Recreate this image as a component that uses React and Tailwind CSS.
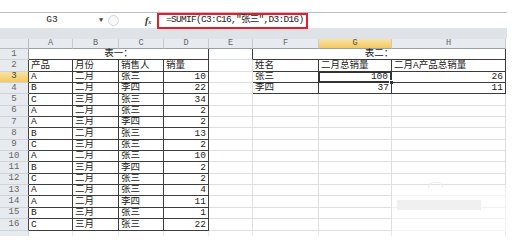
import React from "react";

const COL_W = [44, 46, 45, 45, 44, 66, 73, 114];
const LETTERS = ["A", "B", "C", "D", "E", "F", "G", "H"];

const DARK = "border-[#3c3c3c]";
const LIGHT = "border-[#dedfe0]";

const sales = [
  ["产品", "月份", "销售人", "销量"],
  ["A", "二月", "张三", 10],
  ["B", "二月", "李四", 22],
  ["C", "三月", "张三", 34],
  ["A", "二月", "张三", 2],
  ["A", "三月", "李四", 2],
  ["B", "二月", "张三", 13],
  ["C", "三月", "张三", 2],
  ["A", "二月", "张三", 10],
  ["B", "三月", "李四", 2],
  ["C", "二月", "张三", 2],
  ["A", "二月", "张三", 4],
  ["A", "二月", "李四", 11],
  ["B", "三月", "张三", 1],
  ["C", "三月", "张三", 22],
];

const summary = [
  ["姓名", "二月总销量", "二月A产品总销量"],
  ["张三", 100, 26],
  ["李四", 37, 11],
];

const font = "font-['Liberation_Mono','Noto_Sans_CJK_SC',monospace]";

function Cell({ value, right, bottom, selected, className = "" }) {
  const isNum = typeof value === "number";
  return (
    <div
      className={`relative flex items-end border-r border-b ${right} ${bottom} ${
        isNum ? (selected ? "justify-end pr-[3px]" : "justify-end pr-[2px]") : "justify-start pl-[2px]"
      } overflow-visible text-[9.5px] leading-[11px] text-[#222] ${className}`}
    >
      {value}
      {selected && (
        <>
          <div className="pointer-events-none absolute -left-px -top-px -right-px -bottom-px border-2 border-[#333]" />
          <div className="absolute -right-[3px] -bottom-[3px] h-[5px] w-[5px] border border-white bg-[#333]" />
        </>
      )}
    </div>
  );
}

function RowHeader({ n, active, dark }) {
  return (
    <div
      className={`flex items-center justify-center border-b border-r border-b-[#cfd3d8] ${
        dark ? "border-r-[#444]" : "border-r-[#9aa0a6]"
      } ${
        active ? "bg-gradient-to-b from-[#f9e3a0] to-[#f3c860] text-[#444]" : "bg-[#e7eaee] text-[#666]"
      } text-[9px] leading-none`}
    >
      {n}
    </div>
  );
}

export default function App() {
  const rows = [];

  // row 1: merged titles
  rows.push(
    <React.Fragment key="r1">
      <RowHeader n={1} />
      <div className={`col-span-4 flex items-end justify-center border-r border-b ${DARK} text-[9.5px] leading-[11px] text-[#222]`}>
        表一：
      </div>
      <div className="border-r border-b border-r-[#3c3c3c] border-b-[#dedfe0]" />
      <div className={`col-span-3 flex items-end justify-center border-r border-b ${DARK} text-[9.5px] leading-[11px] text-[#222]`}>
        表二：
      </div>
    </React.Fragment>
  );

  for (let r = 2; r <= 16; r++) {
    const t1 = sales[r - 2];
    const t2 = summary[r - 2];
    rows.push(
      <React.Fragment key={`r${r}`}>
        <RowHeader n={r} active={r === 3} dark />
        {t1.map((v, i) => (
          <Cell key={`a${i}`} value={v} right={DARK} bottom={DARK} />
        ))}
        <Cell value="" right={r <= 4 ? DARK : LIGHT} bottom={LIGHT} />
        {[0, 1, 2].map((i) =>
          t2 ? (
            <Cell
              key={`b${i}`}
              value={t2[i]}
              right={DARK}
              bottom={DARK}
              selected={r === 3 && i === 1}
            />
          ) : (
            <Cell key={`b${i}`} value="" right={LIGHT} bottom={LIGHT} />
          )
        )}
      </React.Fragment>
    );
  }

  return (
    <div className={`relative h-[243px] w-[525px] overflow-hidden bg-white ${font}`}>
      <div className="mt-[12px] w-[507px]">
        {/* formula bar */}
        <div className="flex h-[16px] items-center border-t border-[#b8bcc2] bg-white text-[9.5px] text-[#222]">
          <div className="w-[96px] pl-[8px] text-center">G3</div>
          <div className="flex w-[10px] justify-center text-[7px] text-[#444]">▼</div>
          <div className="ml-[2px] h-[11px] w-[11px] rounded-full border border-[#d3d6da] bg-[#f6f7f8]" />
          <div className="ml-[26px] w-[8px] font-['Liberation_Serif',serif] text-[10px] font-bold italic text-[#333]">
            f<span className="text-[6px]">x</span>
          </div>
          <div className="ml-[4px] flex h-[16px] w-[151px] items-center whitespace-nowrap border-2 border-[#e0202a] pl-[7px] tracking-[-0.7px]">
            =SUMIF(C3:C16,"张三",D3:D16)
          </div>
        </div>
        <div className="h-[11px] bg-[#dfe2e6]" />

        {/* sheet */}
        <div className="grid grid-cols-[29px_44px_46px_45px_45px_44px_66px_73px_114px] grid-rows-[10px_repeat(16,11.35px)_5px]">
          <div className="border-r border-b border-[#b7bcc2] bg-[#e7eaee]" />
          {LETTERS.map((l) => (
            <div
              key={l}
              className={`flex items-center justify-center border-r border-b border-r-[#c7cbd0] border-b-[#9aa0a8] text-[8.5px] leading-none ${
                l === "G"
                  ? "bg-gradient-to-b from-[#f9e3a0] to-[#f3c860] text-[#444]"
                  : "bg-[#e7eaee] text-[#666]"
              }`}
            >
              {l}
            </div>
          ))}
          {rows}
          <div className="border-r border-[#cfd3d8] bg-[#e7eaee]" />
          {COL_W.map((w, i) => (
            <div key={i} className="border-r border-[#e8e8e8]" />
          ))}
        </div>
      </div>

      {/* faint watermark */}
      <div className="absolute left-[392px] top-[188px] h-[44px] w-[118px] bg-white/60">
        <div className="absolute left-[36px] top-[-6px] h-[6px] w-[15px] rounded-t-full border border-b-0 border-[#ececec]" />
        <div className="absolute left-[5px] top-[12px] h-[10px] w-[84px] bg-[#f0f0f0]" />
      </div>
    </div>
  );
}
